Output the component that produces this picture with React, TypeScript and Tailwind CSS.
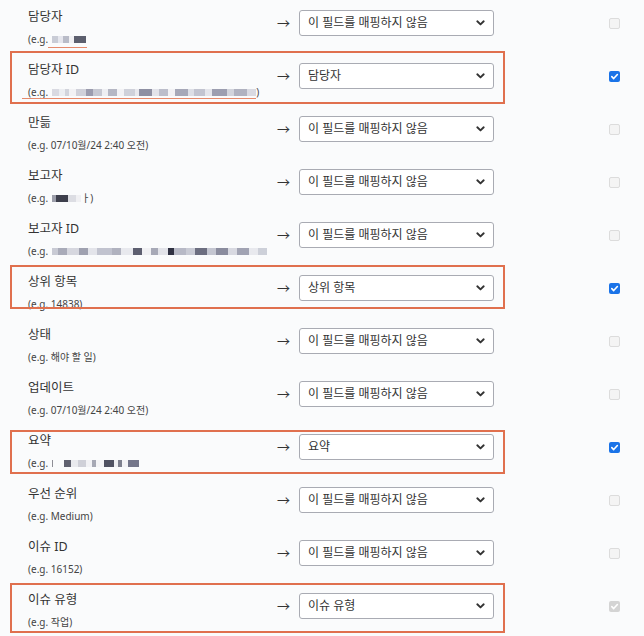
import React from "react";

type Blur = { w: number; c: string }[];

interface Row {
  label: string;
  example?: string;
  blur?: Blur;
  blurScale?: number;
  tail?: string;
  value: string;
  checked?: boolean;
  disabled?: boolean;
  box?: { top: number; bottom: number };
  underline?: { left: number; width: number; top: number };
}

const NONE = "이 필드를 매핑하지 않음";

const rows: Row[] = [
  {
    label: "담당자",
    blur: [
      { w: 4, c: "#c9ccd6" },
      { w: 3, c: "#e6e7ee" },
      { w: 4, c: "#b9bcc8" },
      { w: 3, c: "#f1f1f4" },
      { w: 8, c: "#5c5f6e" },
    ],
    blurScale: 1.5,
    value: NONE,
    underline: { left: 48, width: 39, top: 47 },
  },
  {
    label: "담당자 ID",
    blur: [
      { w: 6, c: "#d9dae2" },
      { w: 5, c: "#eceef2" },
      { w: 4, c: "#d2d4dc" },
      { w: 6, c: "#f2f2f5" },
      { w: 9, c: "#d0d1da" },
      { w: 6, c: "#9b9cae" },
      { w: 8, c: "#c6c8d2" },
      { w: 5, c: "#eeeff3" },
      { w: 8, c: "#b5b7c4" },
      { w: 6, c: "#f2f2f5" },
      { w: 10, c: "#cfd1da" },
      { w: 4, c: "#e9e9ee" },
      { w: 12, c: "#8e90a3" },
      { w: 6, c: "#e2e3ea" },
      { w: 8, c: "#bcbecb" },
      { w: 6, c: "#f2f2f5" },
      { w: 12, c: "#a6a8b8" },
      { w: 5, c: "#dddfe6" },
      { w: 10, c: "#c2c4d0" },
      { w: 6, c: "#e4e5eb" },
      { w: 14, c: "#9c9eb0" },
      { w: 6, c: "#d2d4dc" },
      { w: 12, c: "#b0b2c0" },
      { w: 8, c: "#d9dae2" },
    ],
    blurScale: 1.1,
    tail: ")",
    value: "담당자",
    checked: true,
    box: { top: -2, bottom: 51 },
    underline: { left: 22, width: 234, top: 45 },
  },
  { label: "만듦", example: "(e.g. 07/10월/24 2:40 오전)", value: NONE },
  {
    label: "보고자",
    blur: [
      { w: 3, c: "#9c9eaa" },
      { w: 9, c: "#3d3f4c" },
      { w: 6, c: "#dcdde3" },
      { w: 4, c: "#f0f0f3" },
    ],
    blurScale: 1.3,
    tail: "ㅏ)",
    value: NONE,
  },
  {
    label: "보고자 ID",
    blur: [
      { w: 4, c: "#c8cad4" },
      { w: 6, c: "#a9abb9" },
      { w: 8, c: "#d6d7df" },
      { w: 6, c: "#9fa1b0" },
      { w: 6, c: "#e3e4ea" },
      { w: 10, c: "#c1c3cf" },
      { w: 6, c: "#b0b2bf" },
      { w: 8, c: "#e8e9ee" },
      { w: 6, c: "#5d5f70" },
      { w: 6, c: "#f0f0f3" },
      { w: 5, c: "#a7a9b7" },
      { w: 7, c: "#e2e3e9" },
      { w: 4, c: "#2f3142" },
      { w: 8, c: "#b7b9c6" },
      { w: 6, c: "#c9cbd5" },
      { w: 8, c: "#6c6e80" },
      { w: 6, c: "#c4c6d1" },
      { w: 8, c: "#8a8c9e" },
      { w: 6, c: "#d8d9e1" },
      { w: 8, c: "#a1a3b3" },
      { w: 6, c: "#e8e9ee" },
      { w: 6, c: "#cdd0d9" },
    ],
    blurScale: 1.45,
    value: NONE,
  },
  {
    label: "상위 항목",
    example: "(e.g. 14838)",
    value: "상위 항목",
    checked: true,
    box: { top: 0, bottom: 44 },
  },
  { label: "상태", example: "(e.g. 해야 할 일)", value: NONE },
  { label: "업데이트", example: "(e.g. 07/10월/24 2:40 오전)", value: NONE },
  {
    label: "요약",
    blur: [
      { w: 1, c: "#8e8e96" },
      { w: 8, c: "#fafbfc" },
      { w: 5, c: "#606270" },
      { w: 5, c: "#e9eaee" },
      { w: 6, c: "#cfd0d8" },
      { w: 4, c: "#f2f2f5" },
      { w: 3, c: "#a6a8b4" },
      { w: 6, c: "#f4f4f6" },
      { w: 7, c: "#505262" },
      { w: 3, c: "#eeeff2" },
      { w: 3, c: "#7e808e" },
      { w: 4, c: "#f3f3f5" },
      { w: 8, c: "#74768a" },
    ],
    blurScale: 1.4,
    value: "요약",
    checked: true,
    box: { top: 6, bottom: 50 },
  },
  { label: "우선 순위", example: "(e.g. Medium)", value: NONE },
  { label: "이슈 ID", example: "(e.g. 16152)", value: NONE },
  {
    label: "이슈 유형",
    example: "(e.g. 작업)",
    value: "이슈 유형",
    checked: true,
    disabled: true,
    box: { top: 0, bottom: 50 },
  },
];

function Mosaic({ blur, scale = 1 }: { blur: Blur; scale?: number }) {
  return (
    <span className="inline-flex items-center h-[8px] ml-[4px]">
      {blur.map((b, i) => (
        <span
          key={i}
          className="h-[7px]"
          style={{ width: Math.round(b.w * scale), background: b.c }}
        />
      ))}
    </span>
  );
}

function Checkbox({ checked, disabled }: { checked?: boolean; disabled?: boolean }) {
  if (!checked) {
    return (
      <span className="block w-[11px] h-[11px] rounded-[2px] border border-[#dcdcdc] bg-[#f4f4f4]" />
    );
  }
  return (
    <span
      className={
        disabled
          ? "flex items-center justify-center w-[11px] h-[11px] rounded-[2px] bg-[#d4d4d4]"
          : "flex items-center justify-center w-[11px] h-[11px] rounded-[2px] bg-[#1a73e8]"
      }
    >
      <svg width="9" height="9" viewBox="0 0 10 10" fill="none">
        <path
          d="M2 5.2 L4.1 7.3 L8.2 2.8"
          stroke="white"
          strokeWidth="1.8"
          strokeLinecap="round"
          strokeLinejoin="round"
        />
      </svg>
    </span>
  );
}

function Select({ value }: { value: string }) {
  return (
    <div className="flex items-center justify-between w-[195px] h-[26px] rounded-[3px] border border-[#a9abb3] bg-white pl-[8px] pr-[8px] text-[12px] text-[#333]">
      <span className="leading-none">{value}</span>
      <svg width="9" height="6" viewBox="0 0 9 6" fill="none">
        <path
          d="M1.3 1.3 L4.5 4.4 L7.7 1.3"
          stroke="#333"
          strokeWidth="1.9"
          strokeLinecap="round"
          strokeLinejoin="round"
        />
      </svg>
    </div>
  );
}

function MappingRow({ row }: { row: Row }) {
  return (
    <div className="relative flex items-start h-[53px]">
      {row.box && (
        <div
          className="absolute left-[10px] w-[495px] border-2 border-[#e0704e] pointer-events-none"
          style={{ top: row.box.top, height: row.box.bottom - row.box.top }}
        />
      )}
      {row.underline && (
        <div
          className="absolute h-px bg-[#e58a6c]"
          style={{ left: row.underline.left, width: row.underline.width, top: row.underline.top }}
        />
      )}
      <div className="w-[249px] pl-[28px] pt-[7px] flex flex-col">
        <span className="text-[12.5px] leading-[20px] text-[#333]">{row.label}</span>
        <span className="flex items-center text-[10px] leading-[14px] mt-[5px] text-[#444] whitespace-nowrap">
          {row.example ? (
            row.example
          ) : (
            <>
              <span>(e.g.</span>
              {row.blur && <Mosaic blur={row.blur} scale={row.blurScale} />}
              {row.tail && <span>{row.tail}</span>}
            </>
          )}
        </span>
      </div>
      <span className="w-[50px] pt-[10px] text-[13px] leading-[26px] text-[#333] pl-[28px]">→</span>
      <div className="pt-[10px]">
        <Select value={row.value} />
      </div>
      <div className="pt-[18px] pl-[115px]">
        <Checkbox checked={row.checked} disabled={row.disabled} />
      </div>
    </div>
  );
}

export default function App() {
  return (
    <div
      className="w-[644px] h-[636px] overflow-hidden bg-[#fafbfc]"
      style={{ fontFamily: '"Noto Sans", "Noto Sans CJK KR", sans-serif' }}
    >
      <div className="flex flex-col">
        {rows.map((r, i) => (
          <MappingRow key={i} row={r} />
        ))}
      </div>
    </div>
  );
}
